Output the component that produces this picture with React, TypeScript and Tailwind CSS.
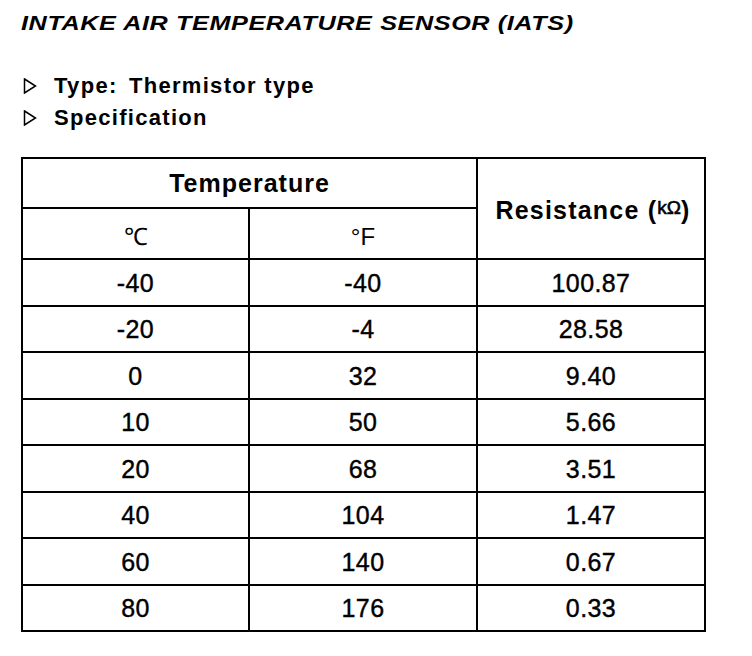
import React from "react";

const rows: [string, string, string][] = [
  ["-40", "-40", "100.87"],
  ["-20", "-4", "28.58"],
  ["0", "32", "9.40"],
  ["10", "50", "5.66"],
  ["20", "68", "3.51"],
  ["40", "104", "1.47"],
  ["60", "140", "0.67"],
  ["80", "176", "0.33"],
];

function Tri() {
  return (
    <svg width="14" height="16" viewBox="0 0 14 16" className="shrink-0 ml-[2px]">
      <path d="M1.5 1 L12.5 8 L1.5 15 Z" fill="none" stroke="#000" strokeWidth="1.5" strokeLinejoin="miter" />
    </svg>
  );
}

export default function App() {
  return (
    <div
      className="w-[752px] h-[656px] bg-white text-black overflow-hidden pl-[21px]"
      style={{ fontFamily: '"Liberation Sans", Arial, sans-serif' }}
    >
      <div className="pt-[11px] h-[35px] text-[21px] leading-[24px] italic font-bold tracking-[0.5px] whitespace-nowrap origin-left scale-x-120">
        INTAKE AIR TEMPERATURE SENSOR (IATS)
      </div>
      <div className="mt-[35px] flex flex-col text-[22px] leading-[32px] font-bold tracking-[1.3px]">
        <div className="flex items-center gap-[17px]">
          <Tri />
          <span>
            Type:<span className="ml-[4px]"> </span>Thermistor type
          </span>
        </div>
        <div className="flex items-center gap-[17px]">
          <Tri />
          <span>Specification</span>
        </div>
      </div>
      <table className="mt-[23px] border-collapse border-[2px] border-black w-[683px] text-[25px] text-center table-fixed">
        <colgroup>
          <col className="w-[227px]" />
          <col className="w-[228px]" />
          <col className="w-[228px]" />
        </colgroup>
        <thead>
          <tr className="h-[50px]">
            <th colSpan={2} className="border-[2px] border-black font-bold text-[25px] tracking-[1px] pt-[2px]">
              Temperature
            </th>
            <th rowSpan={2} className="border-[2px] border-black font-bold text-[25px] tracking-[1.2px] pt-[4px] pl-[4px]">
              Resistance (<span className="text-[19px] font-normal align-[5px] tracking-normal [-webkit-text-stroke:0.6px_black]">kΩ</span>)
            </th>
          </tr>
          <tr className="h-[51px]">
            <td className="border-[2px] border-black font-normal text-[24px] pt-[6px]">℃</td>
            <td className="border-[2px] border-black font-normal text-[24px] pt-[6px]">°F</td>
          </tr>
        </thead>
        <tbody className="[-webkit-text-stroke:0.4px_black]">
          {rows.map((r, i) => (
            <tr key={i} className="h-[46.5px]">
              {r.map((c, j) => (
                <td key={j} className="border-[2px] border-black leading-none tracking-[0.4px] pt-[2px]">
                  {c}
                </td>
              ))}
            </tr>
          ))}
        </tbody>
      </table>
    </div>
  );
}
